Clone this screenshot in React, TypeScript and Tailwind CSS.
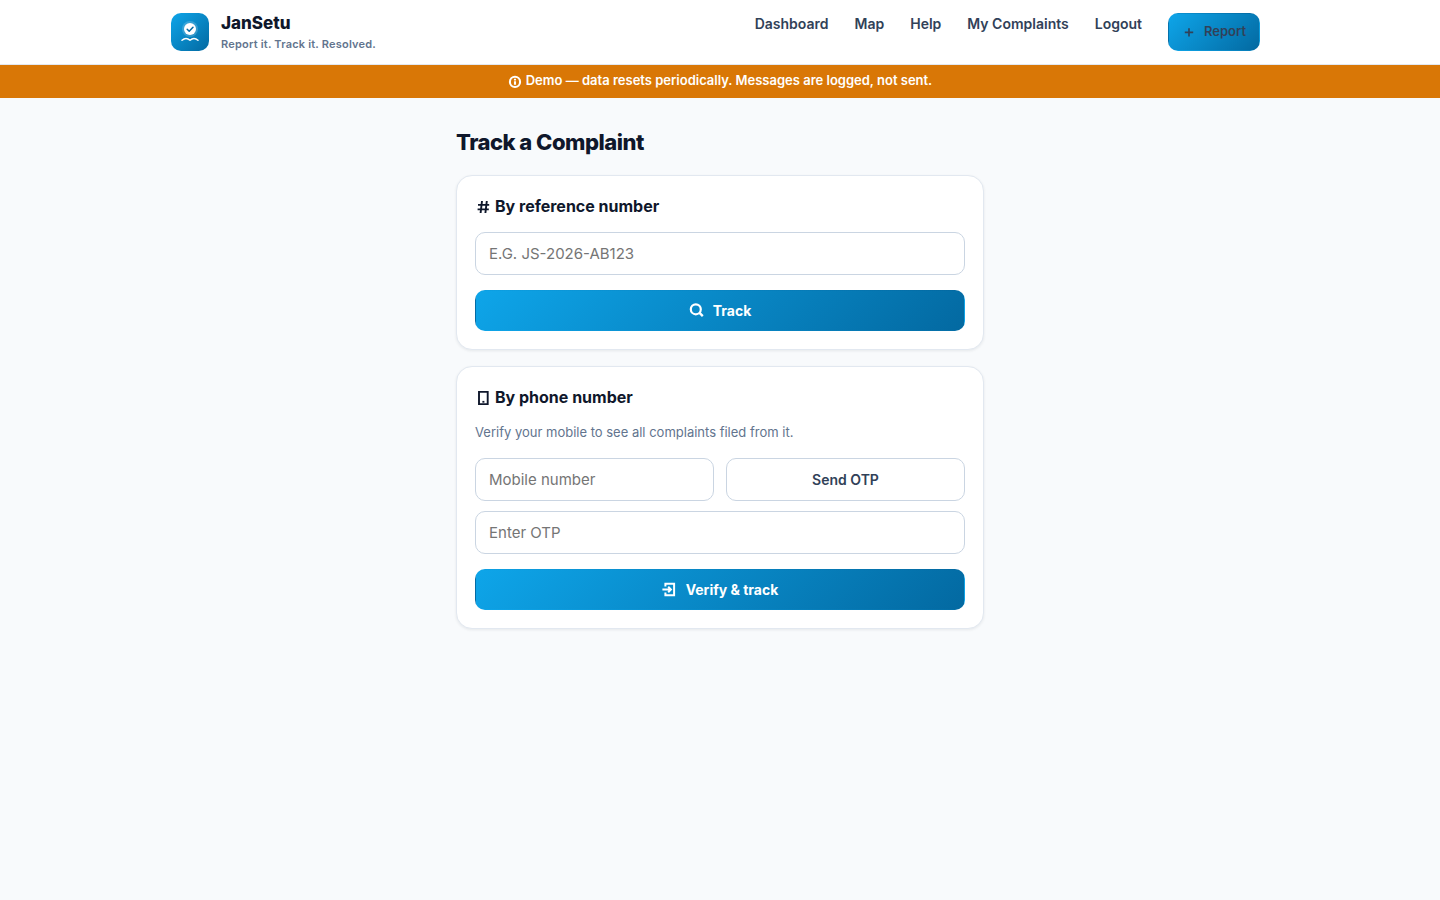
import React from "react";

const primary =
  "flex items-center justify-center gap-2 rounded-[10px] border border-transparent bg-[linear-gradient(135deg,#0ea5e9,#0369a1)]";
const field =
  "h-[43px] w-full min-w-0 rounded-[10px] border border-slate-300 bg-white px-[13px] text-[15px] text-slate-900 placeholder:text-[#757575]";
const card = "rounded-2xl border border-slate-200 bg-white p-[18px] shadow-[0_1px_3px_rgba(15,23,42,0.08)]";
const heading = "flex items-center gap-1 text-base leading-6 font-bold";
const submit = `${primary} mt-[15px] h-[41px] w-full text-[14px] font-bold text-white`;

function Logo() {
  return (
    <svg viewBox="0 0 40 40" className="size-10" aria-hidden="true">
      <defs>
        <linearGradient id="logo" x1="0" y1="0" x2="1" y2="1">
          <stop stopColor="#0ea5e9" />
          <stop offset="1" stopColor="#0369a1" />
        </linearGradient>
      </defs>
      <rect x="1" y="1" width="38" height="38" rx="10" fill="url(#logo)" />
      <circle cx="20" cy="17" r="8" fill="#fff" opacity="0.18" />
      <circle cx="20" cy="17" r="6" fill="#fff" />
      <path d="M17.2 17.2l2 2 3.8-4" fill="none" stroke="#0369a1" strokeWidth="1.5" strokeLinecap="round" strokeLinejoin="round" />
      <path d="M12 28.3q4-3.6 8 0q4-3.6 8 0" fill="none" stroke="#fff" strokeWidth="1.5" strokeLinecap="round" strokeLinejoin="round" />
    </svg>
  );
}

function Glyph({ children, className = "size-4" }: { children: React.ReactNode; className?: string }) {
  return (
    <svg viewBox="0 0 16 16" fill="none" stroke="currentColor" strokeWidth="2" className={`shrink-0 ${className}`} aria-hidden="true">
      {children}
    </svg>
  );
}

const links = ["Dashboard", "Map", "Help", "My Complaints", "Logout"];

export default function App() {
  return (
    <div className="min-h-screen bg-slate-50 font-['Inter',sans-serif] text-slate-900">
      <header className="border-b border-slate-200 bg-white">
        <div className="mx-auto flex h-16 max-w-[1100px] items-center justify-between">
          <a href="#" className="flex items-center gap-[11px]">
            <Logo />
            <span className="flex flex-col">
              <span className="pt-px text-[17px] leading-[22px] font-extrabold">JanSetu</span>
              <span className="pt-px text-[11px] leading-[18px] font-semibold tracking-[0.2px] text-slate-500">Report it. Track it. Resolved.</span>
            </span>
          </a>
          <nav className="flex items-start gap-[26px] pr-2.5 text-[14px] leading-[22px] font-semibold text-slate-700">
            {links.map((l) => (
              <a key={l} href="#">{l}</a>
            ))}
            <a href="#" className={`${primary} h-[38px] w-[92px] pb-0.5 text-[13px]`}>
              <Glyph className="size-3.5">
                <path d="M8 4.8v9.6M3.2 9.6h9.6" strokeWidth="1.9" />
              </Glyph>
              Report
            </a>
          </nav>
        </div>
      </header>
      <div className="flex h-[33px] items-center justify-center gap-1 bg-[#d97706] pb-0.5 text-[13px] font-semibold text-white">
        <Glyph className="size-3.5">
          <circle cx="8" cy="9" r="5.8" strokeWidth="2.4" />
          <path d="M8 8.4v4M8 5.5v1.9" strokeWidth="2.4" />
        </Glyph>
        <p>Demo — data resets periodically. Messages are logged, not sent.</p>
      </div>
      <main className="mx-auto flex max-w-[528px] flex-col gap-4 pt-7">
        <h1 className="text-[22px] leading-[33px] font-extrabold tracking-[-0.5px]">Track a Complaint</h1>
        <form className={card} onSubmit={(e) => e.preventDefault()}>
          <h2 className={heading}>
            <Glyph>
              <path d="M7 3L5.6 15M11.8 3L10.4 15M3 6.9h11.2M2.6 11.4h11.2" strokeWidth="1.9" />
            </Glyph>
            By reference number
          </h2>
          <input className={`${field} mt-[14px]`} placeholder="E.G. JS-2026-AB123" aria-label="Reference number" />
          <button className={submit}>
            <Glyph>
              <circle cx="6.8" cy="6.3" r="5" strokeWidth="2.2" />
              <path d="M10.3 9.7l3.5 3.5" strokeWidth="2.4" />
            </Glyph>
            Track
          </button>
        </form>
        <form className={card} onSubmit={(e) => e.preventDefault()}>
          <h2 className={heading}>
            <Glyph>
              <path d="M4 2.9h8.7v12.2H4z" strokeWidth="1.9" />
              <path d="M7.4 12.8h2" strokeWidth="1.8" />
            </Glyph>
            By phone number
          </h2>
          <p className="mt-3 text-[13px] leading-[22px] text-slate-500">Verify your mobile to see all complaints filed from it.</p>
          <div className="mt-[15px] grid grid-cols-2 gap-3">
            <input className={field} type="tel" placeholder="Mobile number" aria-label="Mobile number" />
            <button type="button" className="rounded-[10px] border border-slate-300 bg-white text-[14px] font-semibold text-slate-700">
              Send OTP
            </button>
          </div>
          <input className={`${field} mt-[10px]`} placeholder="Enter OTP" aria-label="One-time password" />
          <button className={submit}>
            <Glyph>
              <path d="M3.4 4.6V1.8h8.7v11.4H3.4v-2.8M.4 7.5h8.4M6.2 4.8l2.7 2.7-2.7 2.7" strokeWidth="2" />
            </Glyph>
            Verify &amp; track
          </button>
        </form>
      </main>
    </div>
  );
}
